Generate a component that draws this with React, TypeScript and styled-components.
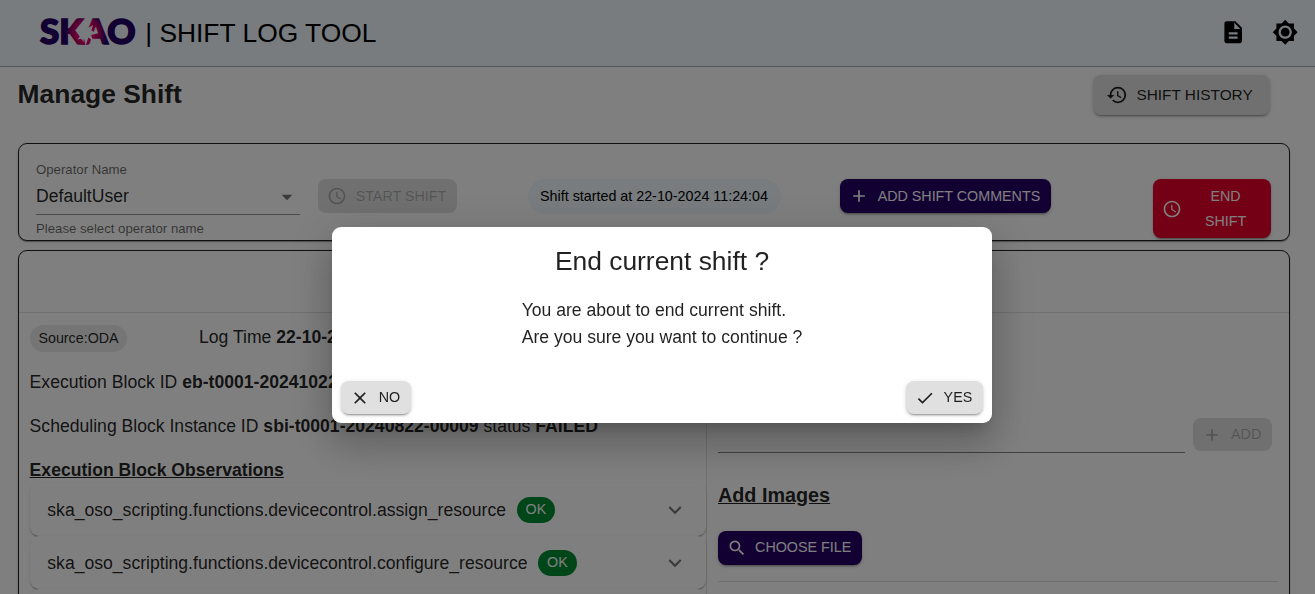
import React from 'react';
import styled, { createGlobalStyle, css } from 'styled-components';
import {
  MdDescription,
  MdBrightness7,
  MdHistory,
  MdAccessTime,
  MdAdd,
  MdClear,
  MdDone,
  MdExpandMore,
  MdSearch,
  MdArrowDropDown,
} from 'react-icons/md';

const GlobalStyle = createGlobalStyle`
  *, *::before, *::after { box-sizing: border-box; }
  html, body { margin: 0; height: 100%; overflow: hidden; background: #fff; }
  body {
    font-family: "Liberation Sans", Arial, sans-serif;
    font-size: 17.6px;
    line-height: 1.5;
    color: rgba(0, 0, 0, 0.87);
  }
`;

const Page = styled.div`
  height: 594px;
  overflow: hidden;
`;

const Header = styled.header`
  display: flex;
  align-items: center;
  height: 67px;
  padding: 0 17px 0 38px;
  background: #f0f8ff;
  border-bottom: 1px solid #a3a6a9;
  color: #000;
`;

const LogoSvg = styled.svg`
  display: block;
  width: 100px;
  height: 48px;
  margin-bottom: 4px;
`;

const AppTitle = styled.div`
  margin-left: 7.2px;
  font-size: 26.4px;
  line-height: 35px;
  white-space: pre;
`;

const HeaderIcons = styled.div`
  display: flex;
  gap: 25.4px;
  margin: 0 0 2px auto;
  font-size: 26.4px;
  svg { display: block; }
`;

const Main = styled.main`
  padding: 0 25px 0 18px;
`;

const TitleRow = styled.div`
  display: flex;
  justify-content: space-between;
  align-items: flex-start;
  height: 76px;
  padding: 8px 20px 0 0;
`;

const PageTitle = styled.h1`
  margin: 0 0 0 -0.4px;
  font-size: 26.4px;
  line-height: 39px;
`;

type Tone = 'grey' | 'primary' | 'danger' | 'disabled';

const tones = {
  grey: css`background: #e0e0e0; color: rgba(0, 0, 0, 0.87);`,
  primary: css`background: #240066; color: #fff;`,
  danger: css`background: #e8002a; color: #fff;`,
  disabled: css`background: rgba(0, 0, 0, 0.12); color: rgba(0, 0, 0, 0.26); box-shadow: none;`,
};

const Button = styled.button<{ $tone: Tone; $large?: boolean; $width?: number; $height?: number }>`
  display: flex;
  align-items: center;
  flex: none;
  border: 0;
  border-radius: 8px;
  font-family: inherit;
  font-size: ${p => (p.$large ? 15.4 : 14.3)}px;
  line-height: 25px;
  padding: ${p => (p.$large ? '0 17.3px 0 13px' : '0 10.8px 0 9px')};
  width: ${p => (p.$width ? `${p.$width}px` : 'auto')};
  height: ${p => p.$height ?? 34}px;
  text-transform: uppercase;
  white-space: nowrap;
  box-shadow: 0 3px 1px -2px rgba(0, 0, 0, 0.2), 0 2px 2px 0 rgba(0, 0, 0, 0.14), 0 1px 5px 0 rgba(0, 0, 0, 0.12);
  svg {
    flex: none;
    width: ${p => (p.$large ? 22 : 20)}px;
    height: ${p => (p.$large ? 22 : 20)}px;
  }
  ${p => tones[p.$tone]}
`;

const ButtonText = styled.span<{ $raised?: boolean }>`
  flex: 1;
  padding-bottom: ${p => (p.$raised ? 2 : 0)}px;
  text-align: right;
`;

const StackedText = styled.span`
  flex: 1;
  padding-left: 9px;
  text-align: center;
  white-space: normal;
`;

const Panel = styled.section`
  border: 1px solid #212121;
  border-radius: 9px;
  background: #fff;
  box-shadow: 0 2px 1px -1px rgba(0, 0, 0, 0.2), 0 1px 1px 0 rgba(0, 0, 0, 0.14), 0 1px 3px 0 rgba(0, 0, 0, 0.12);
`;

const ShiftPanel = styled(Panel)`
  display: flex;
  align-items: flex-start;
  height: 98px;
  padding: 35px 18px 0 17px;
`;

const Field = styled.div`
  width: 264px;
  margin: -19px 18px 0 0;
  color: rgba(0, 0, 0, 0.6);
  font-size: 13.2px;
  line-height: 20px;
`;

const SelectBox = styled.div`
  display: flex;
  align-items: center;
  justify-content: space-between;
  height: 35px;
  padding-bottom: 1px;
  border-bottom: 1px solid rgba(0, 0, 0, 0.42);
  color: rgba(0, 0, 0, 0.87);
  font-size: 17.6px;
  svg { width: 26px; height: 26px; color: rgba(0, 0, 0, 0.54); }
`;

const SelectValue = styled.span`
  padding-bottom: 1px;
`;

const Helper = styled.div`
  padding-top: 4px;
`;

const StartedChip = styled.div`
  width: 253px;
  height: 35px;
  margin: 0 59px 0 71px;
  padding-right: 1px;
  border-radius: 18px;
  background: #f0f8ff;
  color: #000;
  font-size: 14.3px;
  line-height: 34px;
  text-align: center;
`;

const Spacer = styled.div`
  flex: 1;
`;

const LogPanel = styled(Panel)`
  height: 420px;
  margin-top: 9px;
`;

const LogHeader = styled.div`
  height: 62px;
  border-bottom: 1px solid rgba(0, 0, 0, 0.12);
`;

const Columns = styled.div`
  display: flex;
`;

const LogColumn = styled.div`
  width: 688px;
  height: 357px;
  padding: 3px 0 0 11px;
  border-right: 1px solid rgba(0, 0, 0, 0.12);
`;

const LogLine = styled.div`
  display: flex;
  align-items: center;
  height: 44px;
  margin-left: -0.4px;
  white-space: pre;
`;

const Chip = styled.span<{ $ok?: boolean }>`
  display: inline-flex;
  justify-content: center;
  align-items: center;
  height: ${p => (p.$ok ? 26 : 27)}px;
  padding: ${p => (p.$ok ? '0 8.8px 1px' : '0 8.8px')};
  border-radius: 14px;
  font-size: 14.3px;
  line-height: 20px;
  background: ${p => (p.$ok ? '#008c32' : '#ebebeb')};
  color: ${p => (p.$ok ? '#fff' : 'rgba(0, 0, 0, 0.87)')};
`;

const LogTime = styled.span`
  margin-left: 71.5px;
  padding-bottom: 2px;
`;

const Underlined = styled.span`
  font-weight: 700;
  text-decoration: underline;
`;

const Accordions = styled.div`
  margin-top: -9px;
`;

const Accordion = styled.div`
  display: flex;
  align-items: center;
  height: 53px;
  padding: 0 18px 0 17.3px;
  border-radius: 9px;
  background: #fff;
  box-shadow: 0 2px 1px -1px rgba(0, 0, 0, 0.2), 0 1px 1px 0 rgba(0, 0, 0, 0.14), 0 1px 3px 0 rgba(0, 0, 0, 0.12);
  ${Chip} { margin-left: 10.8px; }
  > svg { width: 26px; height: 26px; margin-left: auto; color: rgba(0, 0, 0, 0.54); }
`;

const AccordionName = styled.span`
  padding-top: 2px;
`;

const CommentColumn = styled.div`
  flex: 1;
  padding: 105px 11px 0;
`;

const CommentRow = styled.div`
  display: flex;
  align-items: flex-start;
  gap: 8px;
`;

const CommentInput = styled.div`
  width: 467px;
  height: 35px;
  border-bottom: 1px solid rgba(0, 0, 0, 0.5);
`;

const ImagesTitle = styled.h2`
  margin: 27px 0 21px;
  font-size: 19.8px;
  line-height: 30px;
  text-decoration: underline;
`;

const Divider = styled.div`
  height: 1px;
  margin-top: 16px;
  background: rgba(0, 0, 0, 0.12);
`;

const Backdrop = styled.div`
  position: fixed;
  inset: 0;
  display: flex;
  justify-content: center;
  align-items: flex-start;
  padding: 227px 0 0 9px;
  background: rgba(0, 0, 0, 0.5);
`;

const Dialog = styled.div`
  display: flex;
  flex-direction: column;
  width: 660px;
  height: 196px;
  padding: 14px 9px 9px;
  border-radius: 9px;
  background: #fff;
  box-shadow: 0 11px 15px -7px rgba(0, 0, 0, 0.2), 0 24px 38px 3px rgba(0, 0, 0, 0.14), 0 9px 46px 8px rgba(0, 0, 0, 0.12);
`;

const DialogTitle = styled.h2`
  margin: 0;
  font-size: 26.4px;
  font-weight: 400;
  line-height: 40px;
  text-align: center;
`;

const DialogText = styled.p`
  margin: 16px auto 0;
  line-height: 27px;
`;

const DialogActions = styled.div`
  display: flex;
  justify-content: space-between;
  margin-top: auto;
`;

const Logo = () => (
  <LogoSvg viewBox="0 0 100 48" role="img" aria-label="SKAO">
    <defs>
      <radialGradient id="burst" gradientUnits="userSpaceOnUse" cx="48" cy="26" r="21">
        <stop offset="0.4" stopColor="#e70068" />
        <stop offset="0.65" stopColor="#a80066" />
        <stop offset="1" stopColor="#240066" />
      </radialGradient>
    </defs>
    <text
      x="2"
      y="36.8"
      fontFamily="Lato, sans-serif"
      fontWeight="900"
      fontSize="34.6"
      textLength="95.5"
      lengthAdjust="spacingAndGlyphs"
      fill="#240066"
      stroke="#240066"
      strokeWidth="1.6"
    >
      S
      <tspan fill="url(#burst)" stroke="url(#burst)">KA</tspan>
      O
    </text>
    <path
      fill="#f0f8ff"
      d="M48.5 12 L50.2 21 L55 18 L53.4 23.6 L59 26.5 L53.2 28 L55 34 L50.4 30.6 L47.5 39 L46 31 L39.5 32.5 L43.4 27.6 L38 22.5 L44.6 23.4 L43.5 17 L47.2 20.8 Z"
    />
  </LogoSvg>
);

export default function App() {
  return (
    <>
      <GlobalStyle />
      <Page>
        <Header>
          <Logo />
          <AppTitle>| SHIFT LOG TOOL</AppTitle>
          <HeaderIcons>
            <MdDescription />
            <MdBrightness7 />
          </HeaderIcons>
        </Header>
        <Main>
          <TitleRow>
            <PageTitle>Manage Shift</PageTitle>
            <Button $tone="grey" $large $width={177} $height={40}>
              <MdHistory />
              <ButtonText $raised>Shift History</ButtonText>
            </Button>
          </TitleRow>
          <ShiftPanel>
            <Field>
              Operator Name
              <SelectBox>
                <SelectValue>DefaultUser</SelectValue>
                <MdArrowDropDown />
              </SelectBox>
              <Helper>Please select operator name</Helper>
            </Field>
            <Button $tone="disabled" $width={139}>
              <MdAccessTime />
              <ButtonText>Start Shift</ButtonText>
            </Button>
            <StartedChip>Shift started at 22-10-2024 11:24:04</StartedChip>
            <Button $tone="primary" $width={211}>
              <MdAdd />
              <ButtonText>Add Shift Comments</ButtonText>
            </Button>
            <Spacer />
            <Button $tone="danger" $width={118} $height={59}>
              <MdAccessTime />
              <StackedText>End Shift</StackedText>
            </Button>
          </ShiftPanel>
          <LogPanel>
            <LogHeader />
            <Columns>
              <LogColumn>
                <LogLine>
                  <Chip>Source:ODA</Chip>
                  <LogTime>
                    Log Time <b>22-10-2024 11:24:06</b>
                  </LogTime>
                </LogLine>
                <LogLine>
                  Execution Block ID <b>eb-t0001-20241022-00002</b>
                </LogLine>
                <LogLine>
                  Scheduling Block Instance ID <b>sbi-t0001-20240822-00009</b> status <b>FAILED</b>
                </LogLine>
                <LogLine>
                  <Underlined>Execution Block Observations</Underlined>
                </LogLine>
                <Accordions>
                  {['assign_resource', 'configure_resource'].map(name => (
                    <Accordion key={name}>
                      <AccordionName>ska_oso_scripting.functions.devicecontrol.{name}</AccordionName>
                      <Chip $ok>OK</Chip>
                      <MdExpandMore />
                    </Accordion>
                  ))}
                  <Accordion />
                </Accordions>
              </LogColumn>
              <CommentColumn>
                <CommentRow>
                  <CommentInput />
                  <Button $tone="disabled" $width={79} $height={33}>
                    <MdAdd />
                    <ButtonText>Add</ButtonText>
                  </Button>
                </CommentRow>
                <ImagesTitle>Add Images</ImagesTitle>
                <Button $tone="primary" $width={144}>
                  <MdSearch />
                  <ButtonText $raised>Choose File</ButtonText>
                </Button>
                <Divider />
              </CommentColumn>
            </Columns>
          </LogPanel>
        </Main>
      </Page>
      <Backdrop>
        <Dialog role="dialog">
          <DialogTitle>End current shift ?</DialogTitle>
          <DialogText>
            You are about to end current shift.
            <br />
            Are you sure you want to continue ?
          </DialogText>
          <DialogActions>
            <Button $tone="grey" $width={70} $height={33}>
              <MdClear />
              <ButtonText>No</ButtonText>
            </Button>
            <Button $tone="grey" $width={77} $height={33}>
              <MdDone />
              <ButtonText>Yes</ButtonText>
            </Button>
          </DialogActions>
        </Dialog>
      </Backdrop>
    </>
  );
}
